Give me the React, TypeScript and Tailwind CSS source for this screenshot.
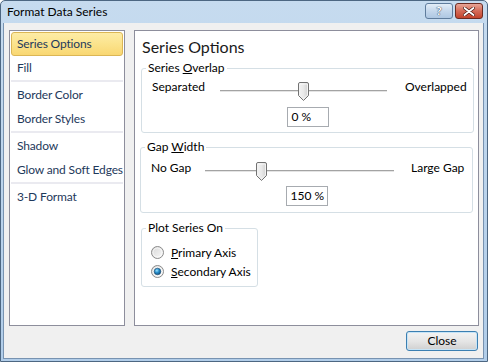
import React from 'react';

const SANS = "font-['Lato','Segoe_UI',sans-serif]";

interface NavGroup {
  items: string[];
}

const NAV_GROUPS: NavGroup[] = [
  { items: ['Series Options', 'Fill'] },
  { items: ['Border Color', 'Border Styles'] },
  { items: ['Shadow', 'Glow and Soft Edges'] },
  { items: ['3-D Format'] },
];

const SliderThumb: React.FC<{ left: number }> = ({ left }) => (
  <svg
    width="11"
    height="19"
    viewBox="0 0 11 19"
    className="absolute top-0"
    style={{ left }}
  >
    <defs>
      <linearGradient id="thumbFill" x1="0" y1="0" x2="1" y2="0">
        <stop offset="0" stopColor="#f4f4f4" />
        <stop offset="0.5" stopColor="#e9e9e9" />
        <stop offset="1" stopColor="#cfcfcf" />
      </linearGradient>
    </defs>
    <path
      d="M0.5 2 Q0.5 0.5 2 0.5 H9 Q10.5 0.5 10.5 2 V13.5 L5.5 18.5 L0.5 13.5 Z"
      fill="url(#thumbFill)"
      stroke="#727272"
    />
    <path d="M1.5 2 H9.5 V13 L5.5 17" fill="none" stroke="#ffffff" strokeOpacity="0.7" />
  </svg>
);

const Slider: React.FC<{ className: string; value: number; min: number; max: number; trackWidth: number }> = ({
  className,
  value,
  min,
  max,
  trackWidth,
}) => {
  const pos = Math.round(((value - min) / (max - min)) * (trackWidth - 1));
  return (
    <div className={`relative h-[19px] ${className}`}>
      <div className="absolute left-0 right-0 top-[8px] h-[3px] border-t border-[#a3a3a3] bg-[#e4e4e4] border-b border-b-white" />
      <SliderThumb left={pos - 5} />
    </div>
  );
};

const ValueBox: React.FC<{ text: string; className?: string }> = ({ text, className = '' }) => (
  <div
    className={`mx-auto w-[42px] h-[20px] border border-[#a7abb0] bg-white pl-[4px] text-[12px] leading-[18px] text-black ${className}`}
  >
    {text}
  </div>
);

const Radio: React.FC<{ checked?: boolean }> = ({ checked }) => (
  <svg width="13" height="13" viewBox="0 0 13 13">
    <defs>
      <linearGradient id={checked ? 'radOnBg' : 'radOffBg'} x1="0" y1="0" x2="1" y2="1">
        <stop offset="0" stopColor="#d7d7d7" />
        <stop offset="1" stopColor="#fbfbfb" />
      </linearGradient>
      <radialGradient id="radDot" cx="0.4" cy="0.35" r="0.7">
        <stop offset="0" stopColor="#9be4ff" />
        <stop offset="0.45" stopColor="#2a8fcb" />
        <stop offset="1" stopColor="#0b4a78" />
      </radialGradient>
    </defs>
    <circle cx="6.5" cy="6.5" r="6" fill={`url(#${checked ? 'radOnBg' : 'radOffBg'})`} stroke="#8a8a8a" />
    <circle cx="6.5" cy="6.5" r="4.5" fill="none" stroke="#ffffff" strokeOpacity="0.6" />
    {checked && <circle cx="6.5" cy="6.5" r="3.3" fill="url(#radDot)" stroke="#1d4e74" strokeWidth="0.6" />}
  </svg>
);

const GroupBox: React.FC<{ legend: React.ReactNode; className: string; children: React.ReactNode }> = ({
  legend,
  className,
  children,
}) => (
  <fieldset className={`border border-[#d5dfe5] rounded-[3px] ${className}`}>
    <legend className="ml-[4px] px-[2px] text-[12px] leading-[16px] text-black">{legend}</legend>
    {children}
  </fieldset>
);

const NavList: React.FC = () => (
  <div className="w-[116px] border border-[#8d8e9c] bg-white p-[1px] flex flex-col">
    {NAV_GROUPS.map((group, gi) => (
      <React.Fragment key={gi}>
        {group.items.map((item, ii) => {
          const active = gi === 0 && ii === 0;
          return (
            <div
              key={item}
              className={`h-[24px] flex items-center pl-[5px] border rounded-[3px] whitespace-nowrap tracking-[-0.15px] text-[12px] text-[#1e395b] ${
                active
                  ? 'border-[#dbb655] bg-gradient-to-b from-[#fdeca6] via-[#fbe38c] to-[#f9d772]'
                  : 'border-transparent'
              }`}
            >
              {item}
            </div>
          );
        })}
        {gi < NAV_GROUPS.length - 1 && <div className="h-[2px] mb-[1px] bg-[#eaeaf0]" />}
      </React.Fragment>
    ))}
  </div>
);

const SeriesOptionsPanel: React.FC = () => (
  <div className="w-[345px] border border-[#8d8e9c] bg-white flex flex-col">
    <h2 className="pl-[7px] pt-[6px] text-[16px] leading-[20px] text-[#1a1a1a]">Series Options</h2>

    <GroupBox
      className="mt-[3px] ml-[6px] w-[333px] pb-[5px]"
      legend={
        <>
          Series <span className="underline">O</span>verlap
        </>
      }
    >
      <div className="mt-[2px] pl-[10px] flex items-start text-[12px] leading-[18px] text-black">
        <span className="w-[68px]">Separated</span>
        <Slider className="w-[167px] mt-[4px]" value={0} min={-100} max={100} trackWidth={167} />
        <span className="ml-[18px]">Overlapped</span>
      </div>
      <ValueBox text="0 %" className="mt-[6px]" />
    </GroupBox>

    <GroupBox
      className="mt-[6px] ml-[5px] w-[333px] pb-[6px]"
      legend={
        <>
          Gap <span className="underline">W</span>idth
        </>
      }
    >
      <div className="mt-[4px] pl-[10px] flex items-start text-[12px] leading-[18px] text-black">
        <span className="w-[54px]">No Gap</span>
        <Slider className="w-[189px] mt-[3px]" value={150} min={0} max={500} trackWidth={189} />
        <span className="ml-[17px]">Large Gap</span>
      </div>
      <ValueBox text="150 %" className="mt-[5px]" />
    </GroupBox>

    <GroupBox className="mt-[7px] ml-[6px] w-[117px] pb-[5px]" legend="Plot Series On">
      <div className="mt-[7px] pl-[9px] flex flex-col text-[12px] text-black">
        <label className="h-[19px] flex items-center gap-[7px]">
          <Radio />
          <span>
            <span className="underline">P</span>rimary Axis
          </span>
        </label>
        <label className="h-[19px] flex items-center gap-[7px]">
          <Radio checked />
          <span>
            <span className="underline">S</span>econdary Axis
          </span>
        </label>
      </div>
    </GroupBox>
  </div>
);

const TitleBar: React.FC = () => (
  <div className="h-[22px] flex items-center pl-[6px] pr-[4px]">
    <span className="flex-1 text-[12px] text-black">Format Data Series</span>
    <div className="flex gap-[2px] mt-[-2px]">
      <div className="w-[28px] h-[16px] rounded-[3px] border border-[#5f7c9c] bg-gradient-to-b from-[#e3edf7] via-[#c4d7ec] to-[#aec7e2] flex items-center justify-center">
        <span className="text-[12px] font-bold leading-none text-white [text-shadow:0_0_1px_#2c3e55,0_0_1px_#2c3e55]">?</span>
      </div>
      <div className="w-[28px] h-[16px] rounded-[3px] border border-[#6b2b22] bg-gradient-to-b from-[#e8a597] via-[#d46a57] to-[#c2432c] flex items-center justify-center">
        <svg width="12" height="9" viewBox="0 0 12 9">
          <path d="M1.5 1 L10.5 8 M10.5 1 L1.5 8" stroke="#4a1a14" strokeWidth="3.2" strokeLinecap="round" />
          <path d="M1.5 1 L10.5 8 M10.5 1 L1.5 8" stroke="#ffffff" strokeWidth="1.8" strokeLinecap="round" />
        </svg>
      </div>
    </div>
  </div>
);

const FormatDataSeriesDialog: React.FC = () => {
  return (
    <div className={`w-[488px] h-[362px] flex flex-col border border-[#4d6782] rounded-t-[5px] bg-gradient-to-b from-[#c6dbef] to-[#b1cde9] ${SANS}`}>
      <TitleBar />
      <div className="flex-1 ml-[2px] mr-[3px] mb-[2px] border-x border-b border-[#7893b1] bg-[#f0f0f0] pl-[5px] pr-[4px] pt-[7px] flex flex-col">
        <div className="h-[296px] flex gap-[9px]">
          <NavList />
          <SeriesOptionsPanel />
        </div>
        <div className="mt-[5px] pr-[1px] flex justify-end">
          <button className="w-[72px] h-[20px] rounded-[3px] border border-[#3c7fb1] bg-gradient-to-b from-[#f3f3f3] via-[#e6e6e6] to-[#d0d0d0] text-[12px] text-black shadow-[inset_0_0_0_1px_#c6e4f7]">
            Close
          </button>
        </div>
      </div>
    </div>
  );
};

export default FormatDataSeriesDialog;
